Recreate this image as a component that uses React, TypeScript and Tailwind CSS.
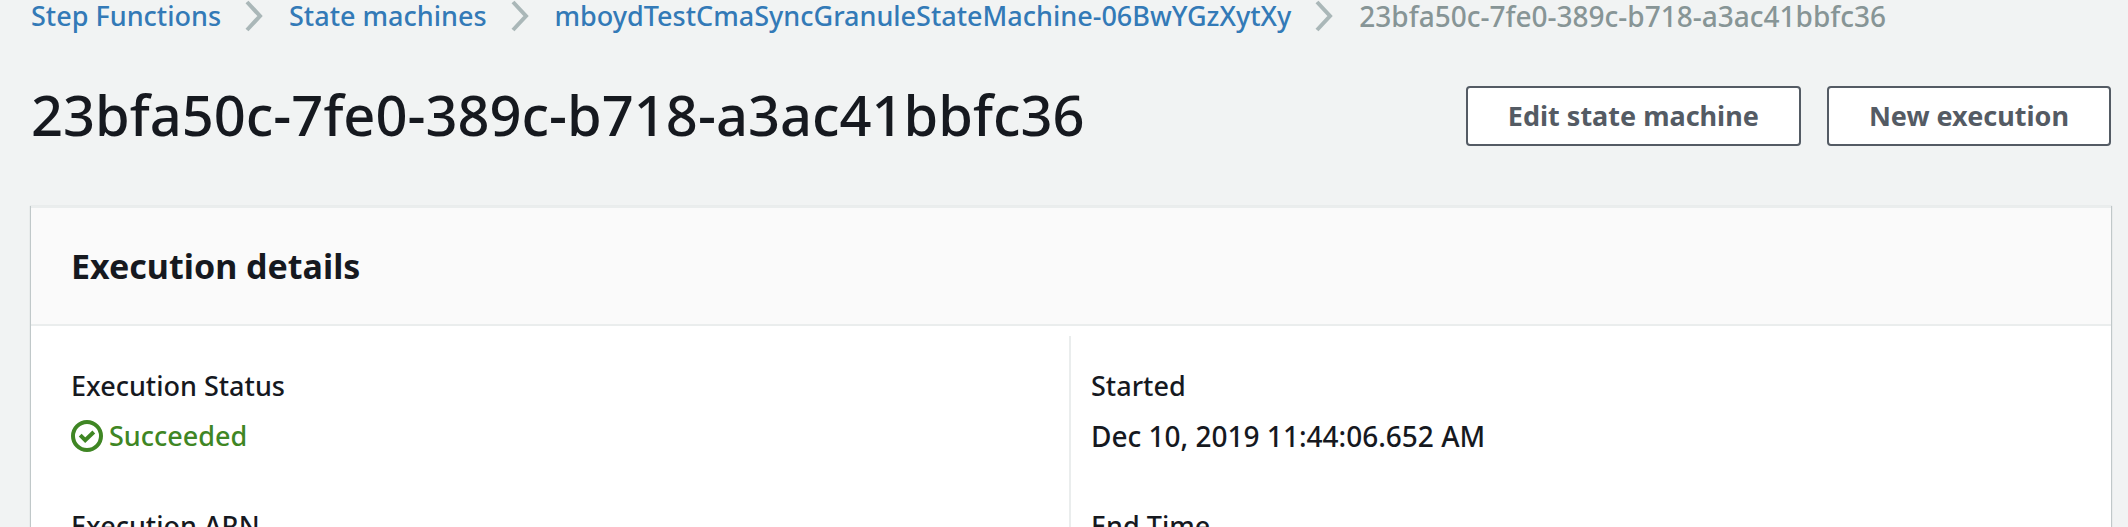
import type { ReactNode } from 'react';

const breadcrumbs = [
  'Step Functions',
  'State machines',
  'mboydTestCmaSyncGranuleStateMachine-06BwYGzXytXy',
];
const executionId = '23bfa50c-7fe0-389c-b718-a3ac41bbfc36';

function Chevron() {
  return (
    <svg className="mr-[26px] ml-6 h-8 w-[18px] shrink-0" viewBox="0 0 18 32" fill="none" aria-hidden="true">
      <path d="M2 2 L15 16 L2 30" stroke="#aab7b8" strokeWidth="4" />
    </svg>
  );
}

function SuccessIcon() {
  return (
    <svg className="h-8 w-8 shrink-0" viewBox="0 0 32 32" fill="none" stroke="currentColor" strokeWidth="4" aria-hidden="true">
      <circle cx="16" cy="16" r="14" />
      <path d="M9.2 15.2 L14.2 20.2 L22.8 12" />
    </svg>
  );
}

function ActionButton({ children }: { children: ReactNode }) {
  return (
    <button
      type="button"
      className="h-15 whitespace-nowrap rounded border-2 border-[#545b64] bg-white px-10 text-[27px] leading-8 font-bold text-[#545b64]"
    >
      {children}
    </button>
  );
}

function Field({ label, children }: { label: string; children?: ReactNode }) {
  return (
    <div className="flex flex-col gap-2.5">
      <dt className="text-[27px] leading-10">{label}</dt>
      {children && <dd className="text-[28px] leading-10">{children}</dd>}
    </div>
  );
}

export default function App() {
  return (
    <main className="flex h-screen flex-col overflow-hidden bg-[#f1f3f3] pr-[17px] pl-[31px] font-['Noto_Sans','Open_Sans',sans-serif] font-medium text-[#16191f]">
      <nav aria-label="Breadcrumb" className="shrink-0">
        <ol className="flex items-center text-[27px] leading-8 whitespace-nowrap">
          {breadcrumbs.map((name) => (
            <li key={name} className="flex items-center">
              <a href="#" className="text-[#337ab7]">{name}</a>
              <Chevron />
            </li>
          ))}
          <li aria-current="page" className="text-[28px] leading-8 text-[#879596]">{executionId}</li>
        </ol>
      </nav>

      <header className="mt-[54px] flex shrink-0 items-start justify-between gap-6">
        <h1 className="text-[56px] leading-14 font-medium">{executionId}</h1>
        <div className="flex gap-[26px]">
          <ActionButton>Edit state machine</ActionButton>
          <ActionButton>New execution</ActionButton>
        </div>
      </header>

      <section className="mt-15 flex grow flex-col border-t-2 border-[#eaeded] bg-white shadow-[0_1px_1px_1px_rgba(0,28,36,0.2)]">
        <div className="border-b-2 border-[#eaeded] bg-[#fafafa] px-10 py-9">
          <h2 className="text-[34px] leading-[44px] font-bold">Execution details</h2>
        </div>
        <div className="grid grow grid-cols-2 pt-2.5">
          <dl className="flex flex-col gap-[50px] border-r-2 border-[#eaeded] pt-[30px] pl-10">
            <Field label="Execution Status">
              <span className="flex items-center gap-1.5 text-[27px] text-[#3f8624]">
                <SuccessIcon />
                Succeeded
              </span>
            </Field>
            <Field label="Execution ARN" />
          </dl>
          <dl className="flex flex-col gap-[50px] pt-[30px] pl-5">
            <Field label="Started">Dec 10, 2019 11:44:06.652 AM</Field>
            <Field label="End Time" />
          </dl>
        </div>
      </section>
    </main>
  );
}
